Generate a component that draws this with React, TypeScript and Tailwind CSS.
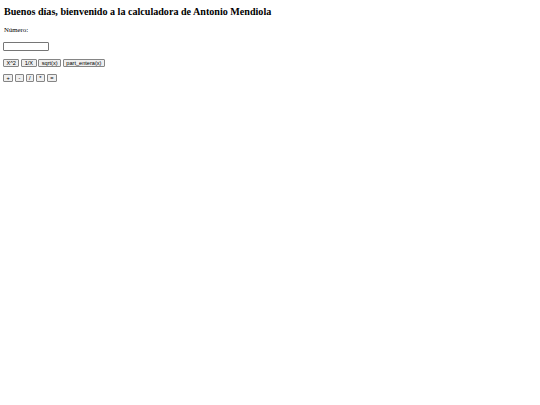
const ops1 = ["X^2", "1/X", "sqrt(x)", "part_entera(x)"];
const ops2 = ["+", "-", "/", "*", "="];

function Btn({ label }: { label: string }) {
  return (
    <button className="h-[8px] px-[2.5px] border border-[#858585] rounded-[1px] bg-[#efefef] text-[5.6px] leading-[6px] text-black font-['Liberation_Sans',Arial,sans-serif]">
      {label}
    </button>
  );
}

export default function App() {
  return (
    <div className="min-h-[405px] bg-white px-[3px] pt-[6px] font-['Liberation_Serif','Times_New_Roman',serif] text-[6.8px] text-black">
      <h2 className="pl-[1px] text-[10.1px] leading-[12px] font-bold">
        Buenos días, bienvenido a la calculadora de Antonio Mendiola
      </h2>
      <p className="mt-[8px] pl-[1px] leading-[8px]">Número:</p>
      <input
        type="text"
        className="mt-[8px] block w-[46px] h-[9px] border border-[#767676] rounded-[1px] bg-white"
      />
      <div className="mt-[8px] flex gap-[1.7px]">
        {ops1.map((o) => (
          <Btn key={o} label={o} />
        ))}
      </div>
      <div className="mt-[7px] flex gap-[1.7px]">
        {ops2.map((o) => (
          <Btn key={o} label={o} />
        ))}
      </div>
    </div>
  );
}
